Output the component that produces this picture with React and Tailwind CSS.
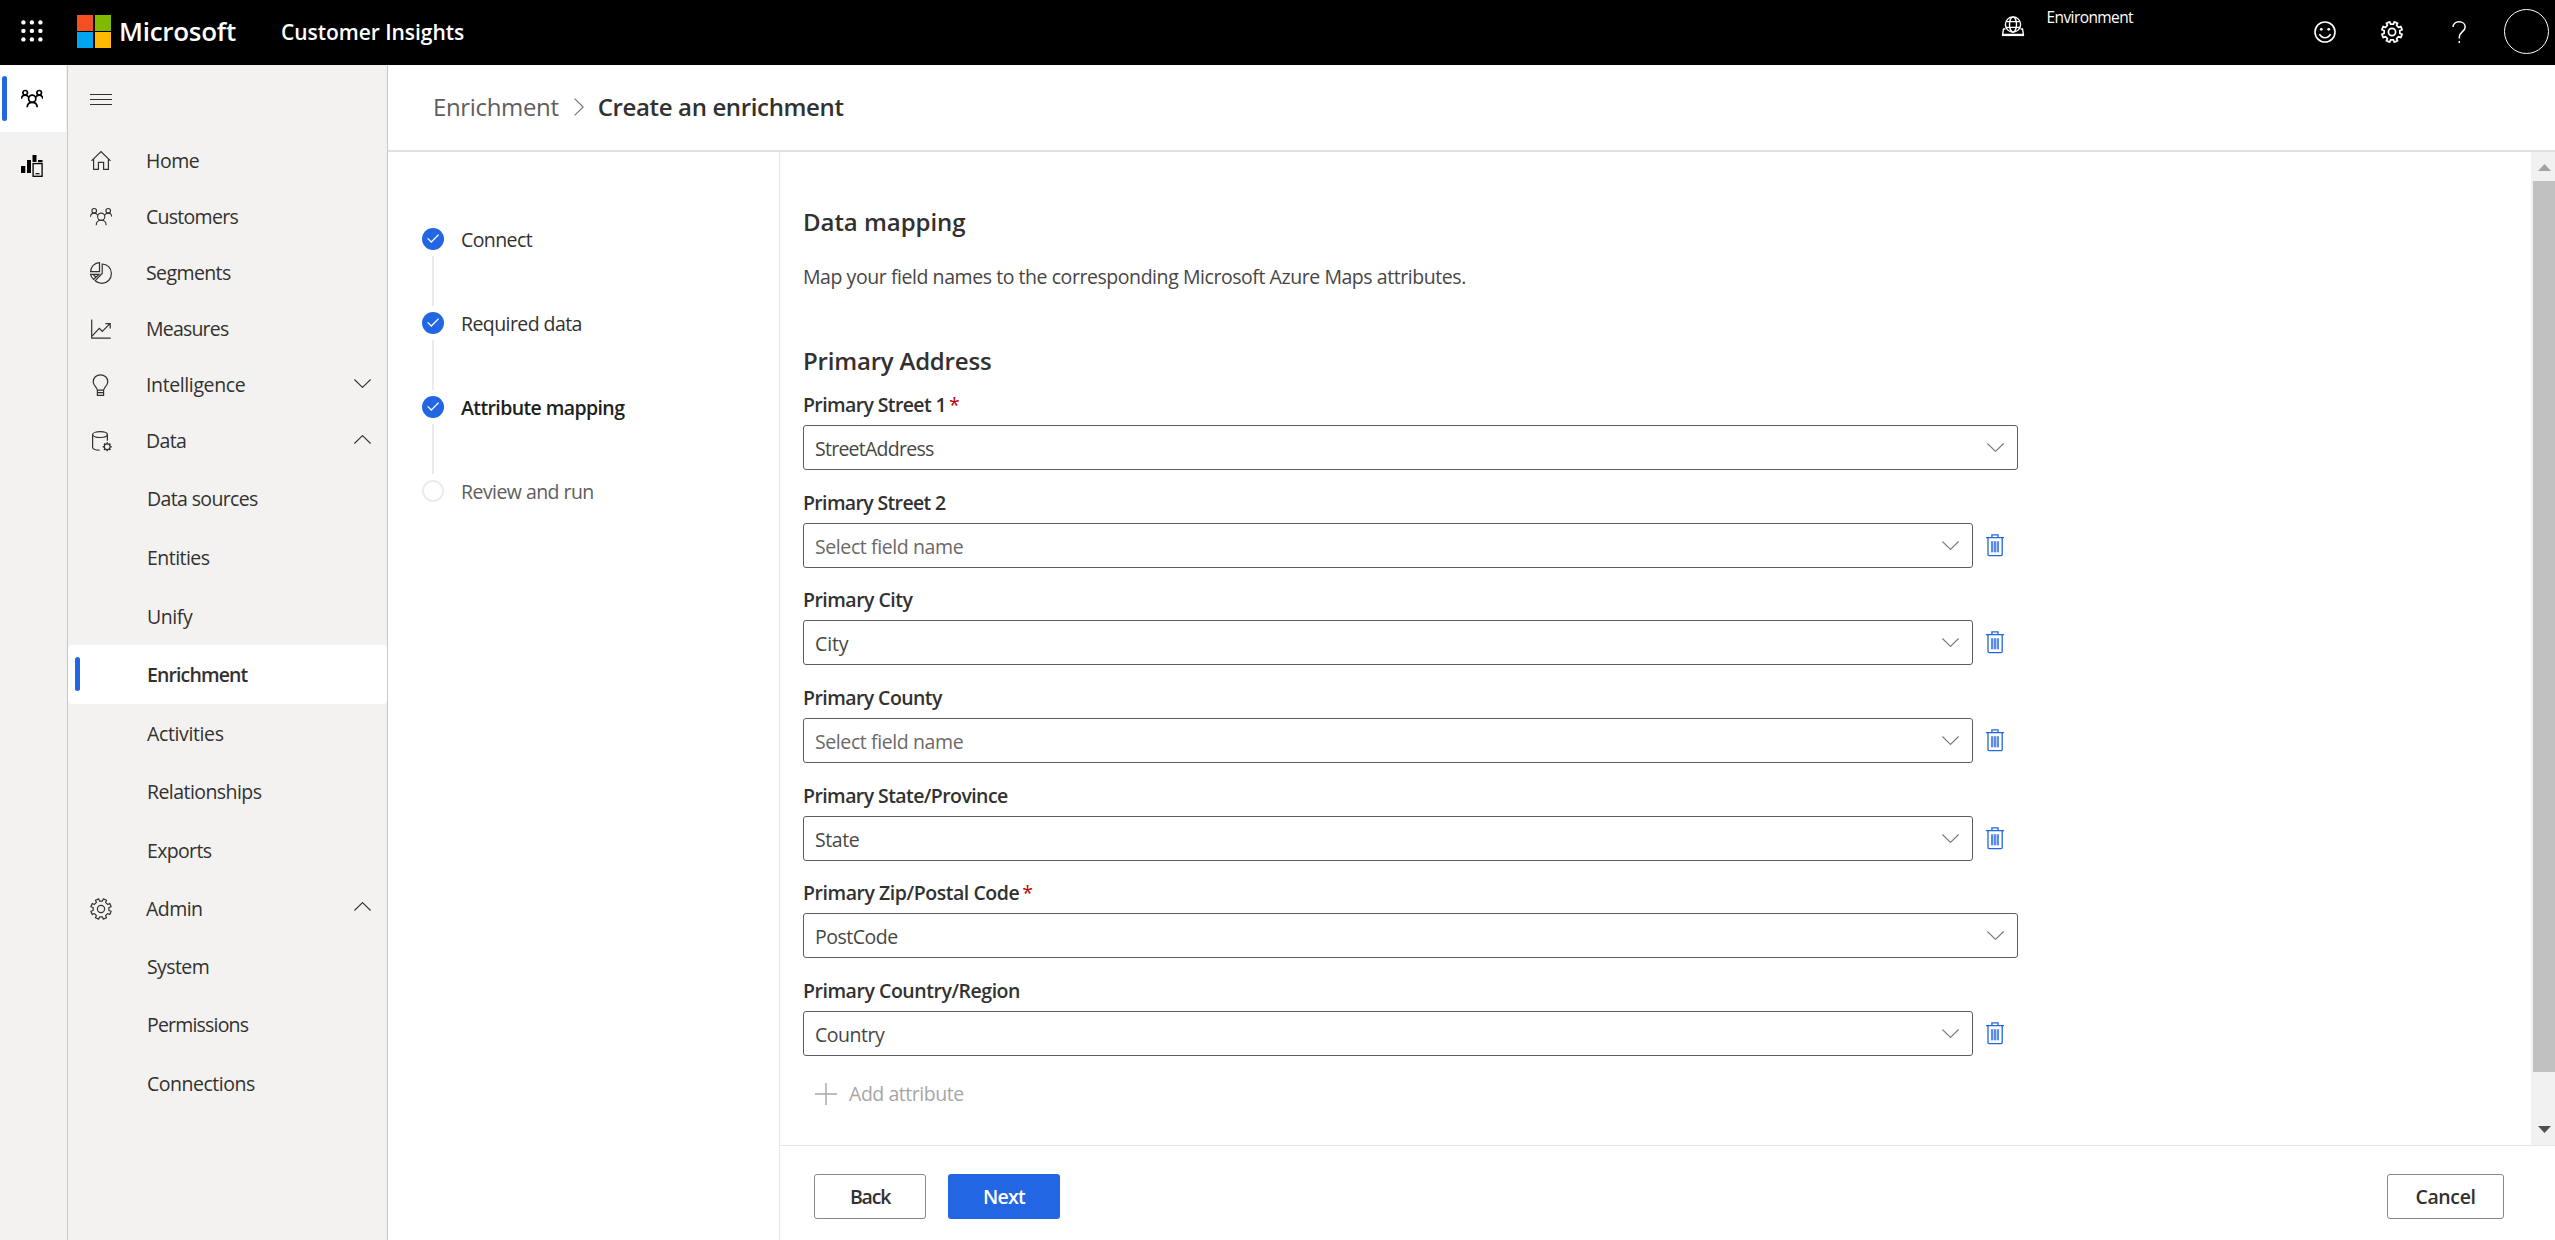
import React from "react";

function gearPath(cx, cy, outer, inner, teeth) {
  const step = (Math.PI * 2) / teeth;
  const points = [];
  for (let i = 0; i < teeth; i++) {
    const a = step * (i + 0.5) - Math.PI / 2;
    [
      [inner, -0.27],
      [outer, -0.22],
      [outer, 0.22],
      [inner, 0.27],
    ].forEach(([r, k]) => {
      const t = a + step * k;
      points.push(`${(cx + r * Math.cos(t)).toFixed(2)} ${(cy + r * Math.sin(t)).toFixed(2)}`);
    });
  }
  return `M${points.join("L")}Z`;
}

function Icon({ className = "", width = 1.2, size = 22, children }) {
  return (
    <svg
      width={size}
      height={size}
      viewBox="0 0 22 22"
      fill="none"
      stroke="currentColor"
      strokeWidth={width}
      className={`shrink-0 ${className}`}
    >
      {children}
    </svg>
  );
}

const Gear = ({ width = 1.3, className }) => (
  <Icon width={width} className={className}>
    <path d={gearPath(11, 11, 10.4, 8, 8)} strokeLinejoin="round" />
    <circle cx="11" cy="11" r="3.6" />
  </Icon>
);

const People = ({ width = 1.3, className }) => (
  <Icon width={width} className={className}>
    <circle cx="4.2" cy="4.8" r="2.3" />
    <circle cx="18.2" cy="4.8" r="2.3" />
    <circle cx="11.2" cy="10.7" r="3.6" />
    <path d="M.5 10.8C.6 8.600 2.200 7.100 4.200 7.100C6 7.100 7.100 7.900 7.800 9.300M21.800 10.800C21.700 8.600 20.200 7.100 18.200 7.100C16.400 7.100 15.300 7.900 14.600 9.300M6.200 19.300C6.300 16.300 8.400 14.300 11.200 14.300C14 14.300 16.100 16.300 16.200 19.300" />
  </Icon>
);

const Home = () => (
  <Icon>
    <path d="M1.500 10.900L11 1.600L20.500 10.900M3.600 9.300V19.300H8.400V12.400H13.600V19.300H18.400V9.300" />
  </Icon>
);

const Segments = () => (
  <Icon>
    <path d="M9.500 .6V9.600H.6C.7 4.800 4.500 .8 9.500 .6ZM12.200 2C17.200 2 21.400 6 21.400 11.400C21.400 17.200 17.200 21.300 12 21.300C9.200 21.300 7 20.400 5.200 18.700L12.200 11.400ZM.6 12.300H9L3.600 17.400C1.900 15.800 1 14.200 .6 12.300ZM3 12.400L6 15.200" />
  </Icon>
);

const Measures = () => (
  <Icon>
    <path d="M1.700 1.500V20.200H20.700M2 18.200L9.300 10.400L12.300 13.300L20 5.600M15.400 5.600H20.200V10.400" />
  </Icon>
);

const Bulb = () => (
  <Icon>
    <path d="M7.400 16.200C7 13 3.200 11.800 3.200 7.800C3.200 3.800 6.400 .8 10.500 .8C14.600 .8 17.800 3.800 17.800 7.800C17.800 11.800 14 13 13.600 16.200ZM7.400 16.200V21.300H13.600V16.200M7.400 18.700H13.600" />
  </Icon>
);

const Database = () => (
  <Icon>
    <ellipse cx="10" cy="4.600" rx="7.400" ry="2.900" />
    <path d="M2.600 4.600V17.200C2.600 18.900 5 20.100 9.600 20.200M17.400 4.600V10.800" />
    <circle cx="17.200" cy="16.800" r="2.900" />
    <path
      d="M17.200 12.300V13.700M17.200 19.900V21.300M12.700 16.800H14.100M20.300 16.800H21.700M14 13.600L15 14.600M19.400 19L20.400 20M14 20L15 19M19.400 14.600L20.400 13.600"
      strokeWidth="1.500"
    />
  </Icon>
);

const Insights = () => (
  <svg width="22" height="22" viewBox="0 0 22 22" className="shrink-0 text-black">
    <path d="M0 11h4.300v7H0zM6 5h4v13H6zM11.500 0h4v7h-4zM17 5h4.500v2.300H17z" fill="currentColor" />
    <rect x="12.100" y="8.600" width="9" height="12.700" fill="none" stroke="currentColor" strokeWidth="1.300" />
    <path d="M14.500 18.700h4" stroke="currentColor" strokeWidth="1.200" />
  </svg>
);

function Chevron({ up, className = "" }) {
  return (
    <svg width="17" height="9" viewBox="0 0 17 9" fill="none" stroke="currentColor" strokeWidth="1.100" className={`shrink-0 ${className}`}>
      <path d={up ? "M.4 8.500L8.500 .6L16.600 8.500" : "M.4 .5L8.500 8.400L16.600 .5"} />
    </svg>
  );
}

function Trash() {
  return (
    <svg width="18" height="23" viewBox="0 0 18 23" fill="none" stroke="#2266e3" strokeWidth="1.300" className="shrink-0">
      <path d="M0 3.700H18M5.900 3.400V.8H12V3.400" />
      <path d="M2 3.700V20.600Q2 21.700 3.100 21.700H15.100Q16.200 21.700 16.200 20.600V3.700" />
      <rect x="5" y="7.300" width="8" height="11" fill="#bcd0f7" stroke="none" />
      <path d="M6 7.300V18.300M9 7.300V18.300M12 7.300V18.300" />
    </svg>
  );
}

function TopBar() {
  return (
    <header className="flex h-[65px] shrink-0 items-start bg-black text-white">
      <svg width="22" height="22" viewBox="0 0 22 22" fill="currentColor" className="mt-5 ml-[21px] shrink-0">
        {[2.4, 10.9, 19.4].map((y) =>
          [2.4, 10.9, 19.4].map((x) => <circle key={`${x}-${y}`} cx={x} cy={y} r="2.200" />)
        )}
      </svg>
      <div className="mt-[15px] ml-[34px] grid shrink-0 grid-cols-[16px_16px] grid-rows-[16px_16px] gap-x-[2px] gap-y-px">
        <div className="bg-[#f25022]" />
        <div className="bg-[#7fba00]" />
        <div className="bg-[#00a4ef]" />
        <div className="bg-[#ffb900]" />
      </div>
      <div className="ml-[8px] w-[160px] shrink-0 text-[26px] leading-[63px] font-semibold tracking-[-0.27px]">Microsoft</div>
      <div className="ml-[2px] shrink-0 text-[21px] leading-[65px] font-semibold tracking-[-0.05px]">Customer Insights</div>
      <div className="ml-auto flex shrink-0 items-start">
        <svg width="24" height="22" viewBox="0 0 24 22" fill="none" stroke="currentColor" strokeWidth="1.400" className="mt-4">
          <circle cx="12" cy="8.500" r="7.600" />
          <ellipse cx="12" cy="8.500" rx="3.500" ry="7.600" />
          <path d="M5.200 5.600H18.800M5.200 11.400H18.800M4.400 13H2.500L1.600 18.500H22.400L21.500 13H19.600" />
          <path d="M1 19.200H23" strokeWidth="1.800" />
        </svg>
        <div className="mt-[7px] ml-[22px] text-[15.5px] leading-[20px] tracking-[-0.6px]">Environment</div>
      </div>
      <div className="ml-[181px] flex h-[63px] w-[241px] shrink-0 items-center">
        <Icon width={1.6}>
          <circle cx="11" cy="11" r="10" />
          <circle cx="7.300" cy="8.300" r="1.400" fill="currentColor" stroke="none" />
          <circle cx="14.700" cy="8.300" r="1.400" fill="currentColor" stroke="none" />
          <path d="M5.500 13.200C6.700 15.500 8.600 16.700 11 16.700C13.400 16.700 15.300 15.500 16.500 13.200" />
        </Icon>
        <Gear width={1.7} className="ml-[45px]" />
        <Icon width={1.5} className="ml-[45px]">
          <path d="M5 6C5 2.900 7.600 .8 11 .8C14.600 .8 17.200 3 17.200 6C17.200 10.400 11.300 11 11.300 16V17.600M11.300 20V22" />
        </Icon>
        <div className="ml-[34px] size-[45px] shrink-0 rounded-full border border-white" />
      </div>
    </header>
  );
}

const navTop = [
  { icon: <Home />, label: "Home", track: "tracking-[-0.49px]" },
  { icon: <People width={1.1} />, label: "Customers", track: "tracking-[-0.72px]" },
  { icon: <Segments />, label: "Segments", track: "tracking-[-0.6px]" },
  { icon: <Measures />, label: "Measures", track: "tracking-[-0.8px]" },
  { icon: <Bulb />, label: "Intelligence", track: "tracking-[-0.38px]", chevron: "down" },
  { icon: <Database />, label: "Data", track: "tracking-[-0.64px]", chevron: "up" },
];

const navData = [
  { label: "Data sources", track: "tracking-[-0.64px]" },
  { label: "Entities", track: "tracking-[-0.54px]" },
  { label: "Unify", track: "tracking-[-0.41px]" },
  { label: "Enrichment", track: "tracking-[-0.88px]", active: true },
  { label: "Activities", track: "tracking-[-0.37px]" },
  { label: "Relationships", track: "tracking-[-0.56px]" },
  { label: "Exports", track: "tracking-[-0.65px]" },
];

const navAdmin = [
  { label: "System", track: "tracking-[-0.59px]" },
  { label: "Permissions", track: "tracking-[-0.81px]" },
  { label: "Connections", track: "tracking-[-0.48px]" },
];

function NavItem({ icon, label, track, chevron }) {
  return (
    <div className="flex h-14 items-center pr-[16px] pl-[22px]">
      {icon}
      <span className={`ml-[34px] flex-1 ${track}`}>{label}</span>
      {chevron && <Chevron up={chevron === "up"} className="-translate-y-0.5" />}
    </div>
  );
}

function NavSub({ label, track, active }) {
  return (
    <div className={`flex h-[58.67px] items-center ${active ? "rounded-sm bg-white font-semibold" : ""}`}>
      <div className={`ml-[7px] h-[34px] w-[5px] rounded-sm ${active ? "bg-[#2266e3]" : ""}`} />
      <span className={`ml-[67px] pt-px ${track}`}>{label}</span>
    </div>
  );
}

function Sidebar() {
  return (
    <nav className="w-80 shrink-0 border-r border-[#c8c8c8] bg-[#f3f2f1] text-[#323130]">
      <div className="flex h-[68px] flex-col justify-center gap-1 pl-[22px]">
        <div className="h-px w-[22px] bg-[#323130]" />
        <div className="h-px w-[22px] bg-[#323130]" />
        <div className="h-px w-[22px] bg-[#323130]" />
      </div>
      {navTop.map((n) => (
        <NavItem key={n.label} {...n} />
      ))}
      {navData.map((n) => (
        <NavSub key={n.label} {...n} />
      ))}
      <div className="pt-px">
        <NavItem icon={<Gear width={1.2} />} label="Admin" track="tracking-[-0.56px]" chevron="up" />
      </div>
      {navAdmin.map((n) => (
        <NavSub key={n.label} {...n} />
      ))}
    </nav>
  );
}

const steps = [
  { label: "Connect", track: "tracking-[-0.59px]", state: "done" },
  { label: "Required data", track: "tracking-[-0.57px]", state: "done" },
  { label: "Attribute mapping", track: "tracking-[-0.6px]", state: "current" },
  { label: "Review and run", track: "tracking-[-0.55px]", state: "todo" },
];

function Steps() {
  return (
    <div className="w-[392px] shrink-0 border-r border-[#e6e6e6] pt-[76px] pl-[34px]">
      {steps.map(({ label, track, state }, i) => (
        <div key={label}>
          <div className="flex h-[22px] items-center">
            {state === "todo" ? (
              <div className="size-[22px] rounded-full border-2 border-[#edebe9]" />
            ) : (
              <svg width="22" height="22" viewBox="0 0 22 22" fill="none">
                <circle cx="11" cy="11" r="11" fill="#2266e3" />
                <path d="M5.600 10.400L9.300 14L16.600 6.600" stroke="#fff" strokeWidth="1.300" />
              </svg>
            )}
            <span
              className={`ml-[17px] translate-y-px ${track} ${
                state === "current" ? "font-semibold text-[#201f1e]" : state === "todo" ? "text-[#605e5c]" : "text-[#323130]"
              }`}
            >
              {label}
            </span>
          </div>
          {i < steps.length - 1 && <div className="my-[6px] ml-[10px] h-[50px] w-[2px] bg-[#edebe9]" />}
        </div>
      ))}
    </div>
  );
}

const fields = [
  { label: "Primary Street 1", lt: "tracking-[-0.62px]", value: "StreetAddress", vt: "tracking-[-0.74px]", required: true },
  { label: "Primary Street 2", lt: "tracking-[-0.65px]" },
  { label: "Primary City", lt: "tracking-[-0.52px]", value: "City", vt: "tracking-[-0.1px]" },
  { label: "Primary County", lt: "tracking-[-0.57px]" },
  { label: "Primary State/Province", lt: "tracking-[-0.58px]", value: "State", vt: "tracking-[-0.45px]" },
  { label: "Primary Zip/Postal Code", lt: "tracking-[-0.45px]", value: "PostCode", vt: "tracking-[-0.48px]", required: true },
  { label: "Primary Country/Region", lt: "tracking-[-0.46px]", value: "Country", vt: "tracking-[-0.48px]" },
];

function Field({ label, lt, value, vt, required }) {
  return (
    <div className="h-[97.67px]">
      <div className={`h-9 leading-[31px] font-semibold text-[#323130] ${lt}`}>
        {label}
        {required && <span className="ml-[3px] font-normal text-[#c00000]">*</span>}
      </div>
      <div className="flex items-center">
        <div
          className={`flex h-[45px] items-center justify-between rounded-[3px] border border-[#605e5c] pr-[13px] pl-[11px] ${
            required ? "w-[1215px]" : "w-[1170px]"
          }`}
        >
          <span className={`translate-y-px ${value ? `text-[#484644] ${vt}` : "tracking-[-0.4px] text-[#6b6967]"}`}>
            {value || "Select field name"}
          </span>
          <Chevron className="text-[#797775]" />
        </div>
        {!required && (
          <div className="ml-[13px] flex">
            <Trash />
          </div>
        )}
      </div>
    </div>
  );
}

function Scrollbar() {
  return (
    <div className="flex w-6 shrink-0 flex-col items-end bg-[#f1f1f1] pl-[2px]">
      <div className="flex h-[29px] w-[22px] items-end justify-center pb-[10px]">
        <svg width="13" height="7" viewBox="0 0 13 7" fill="#a3a3a3">
          <path d="M6.500 0L13 7H0Z" />
        </svg>
      </div>
      <div className="h-[891px] w-[22px] bg-[#c1c1c1]" />
      <div className="mt-auto flex h-[19px] w-[22px] justify-center">
        <svg width="13" height="7" viewBox="0 0 13 7" fill="#505050">
          <path d="M0 0H13L6.500 7Z" />
        </svg>
      </div>
    </div>
  );
}

function Mapping() {
  return (
    <div className="flex min-w-0 flex-1 flex-col">
      <div className="flex h-[993px] shrink-0">
        <div className="flex-1 pt-[50px] pl-[23px] text-[#323130]">
          <h2 className="text-[24px] leading-[40px] font-semibold tracking-[-0.05px]">Data mapping</h2>
          <p className="mt-[20px] leading-[30px] tracking-[-0.44px] text-[#484644]">
            Map your field names to the corresponding Microsoft Azure Maps attributes.
          </p>
          <h3 className="mt-[49px] mb-[8px] text-[24px] leading-[40px] font-semibold tracking-[-0.2px]">Primary Address</h3>
          {fields.map((f) => (
            <Field key={f.label} {...f} />
          ))}
          <div className="mt-[6px] flex h-[30px] items-center pl-[12px] text-[#a6a6a6]">
            <Icon width={1.4}>
              <path d="M11 0V22M0 11H22" />
            </Icon>
            <span className="ml-[12px] tracking-[-0.45px]">Add attribute</span>
          </div>
        </div>
        <Scrollbar />
      </div>
      <div className="flex flex-1 items-start border-t border-[#e6e6e6] pt-[28px] pr-[51px] pl-[34px] font-semibold text-[#323130]">
        <button className="h-[45px] w-[112px] rounded-[3px] border border-[#8a8886] pt-px tracking-[-1.2px]">Back</button>
        <button className="ml-[22px] h-[45px] w-[112px] rounded-[3px] bg-[#2266e3] pt-px tracking-[-0.8px] text-white">Next</button>
        <button className="ml-auto h-[45px] w-[117px] rounded-[3px] border border-[#8a8886] pt-px tracking-[-0.4px]">Cancel</button>
      </div>
    </div>
  );
}

export default function App() {
  return (
    <div className="flex h-[1240px] w-full flex-col overflow-hidden bg-white font-['Open_Sans','Noto_Sans',sans-serif] text-[19.5px] whitespace-nowrap">
      <TopBar />
      <div className="flex flex-1">
        <div className="w-[68px] shrink-0 border-r border-[#c8c8c8] bg-[#f3f2f1] text-black">
          <div className="flex h-[67px] w-[66px] items-center bg-white">
            <div className="ml-[2px] h-[45px] w-[5px] rounded-sm bg-[#2266e3]" />
            <People width={1.7} className="ml-[14px]" />
          </div>
          <div className="mt-[23px] ml-[21px]">
            <Insights />
          </div>
        </div>
        <Sidebar />
        <div className="flex min-w-0 flex-1 flex-col">
          <div className="flex h-[87px] shrink-0 items-center border-b-2 border-[#e1e1e1] pb-[2px] pl-[45px] text-[24px]">
            <span className="tracking-[-0.34px] text-[#605e5c]">Enrichment</span>
            <svg width="10" height="18" viewBox="0 0 10 18" fill="none" stroke="#797775" strokeWidth="1.200" className="ml-[15px]">
              <path d="M.6 .6L9.200 9L.6 17.400" />
            </svg>
            <span className="ml-[14px] font-semibold tracking-[-0.36px] text-[#323130]">Create an enrichment</span>
          </div>
          <div className="flex flex-1">
            <Steps />
            <Mapping />
          </div>
        </div>
      </div>
    </div>
  );
}
